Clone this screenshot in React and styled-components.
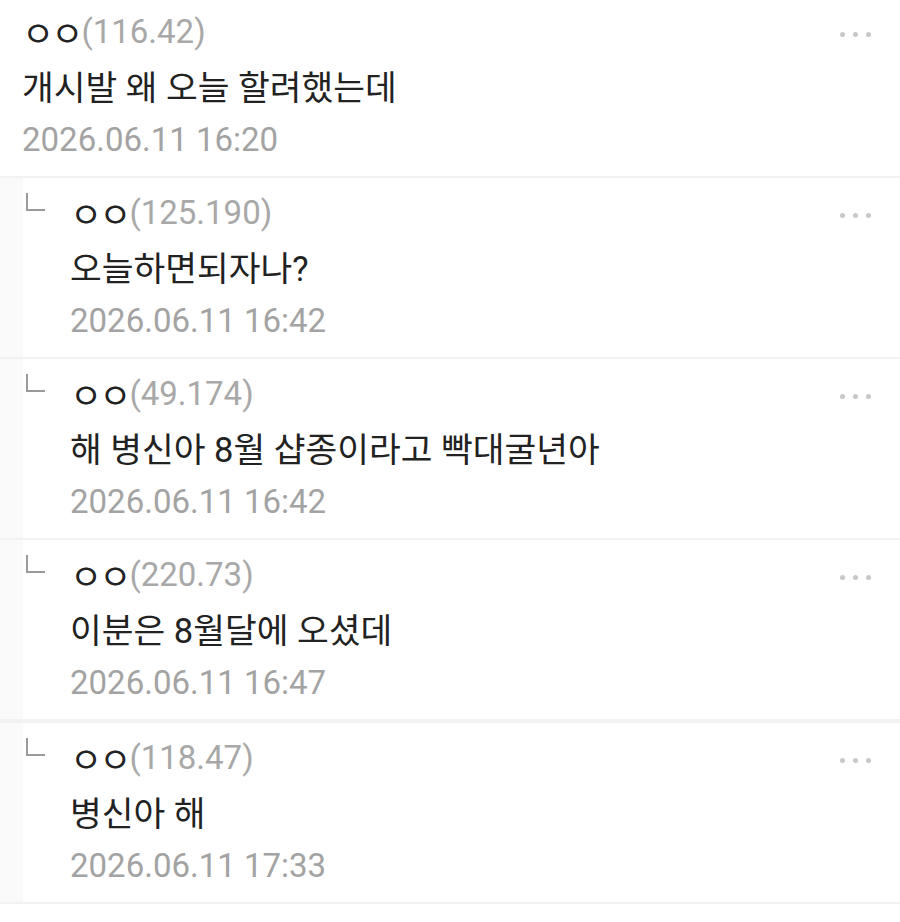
import styled, { createGlobalStyle } from "styled-components";

const comments = [
  { id: 1, ip: "116.42", text: "개시발 왜 오늘 할려했는데", date: "2026.06.11 16:20" },
  { id: 2, ip: "125.190", text: "오늘하면되자나?", date: "2026.06.11 16:42", reply: true },
  { id: 3, ip: "49.174", text: "해 병신아 8월 샵종이라고 빡대굴년아", date: "2026.06.11 16:42", reply: true },
  { id: 4, ip: "220.73", text: "이분은 8월달에 오셨데", date: "2026.06.11 16:47", reply: true, thick: true },
  { id: 5, ip: "118.47", text: "병신아 해", date: "2026.06.11 17:33", reply: true },
];

function App() {
  return (
    <>
      <GlobalStyle />
      <List>
        {comments.map((c, i) => (
          <Row key={c.id} $reply={c.reply} $first={i === 0} $thick={c.thick}>
            {c.reply && (
              <>
                <Strip />
                <MarkerCol>
                  <Marker />
                </MarkerCol>
              </>
            )}
            <Body>
              <Line>
                <Name>ㅇㅇ</Name>
                <Ip>({c.ip})</Ip>
              </Line>
              <Line>
                <Text>{c.text}</Text>
              </Line>
              <Line>
                <DateText>{c.date}</DateText>
              </Line>
            </Body>
            <Menu>
              <Dot />
              <Dot />
              <Dot />
            </Menu>
          </Row>
        ))}
      </List>
    </>
  );
}

const GlobalStyle = createGlobalStyle`
  html, body {
    margin: 0;
    padding: 0;
    background: #ffffff;
  }
  body {
    font-family: Roboto, "Noto Sans CJK KR", sans-serif;
    -webkit-font-smoothing: antialiased;
  }
`;

const List = styled.div`
  width: 900px;
  height: 922px;
  overflow: hidden;
  background: #ffffff;
`;

const Row = styled.div`
  display: flex;
  align-items: stretch;
  margin-top: ${(p) => (p.$first ? "-3px" : "0")};
  padding-left: ${(p) => (p.$reply ? "0" : "22px")};
  border-bottom: ${(p) => (p.$thick ? "4px" : "2px")} solid #f2f2f2;
`;

const Strip = styled.div`
  width: 23px;
  flex-shrink: 0;
  background: #fafafa;
`;

const MarkerCol = styled.div`
  width: 47px;
  flex-shrink: 0;
  padding: 15px 0 0 3px;
  box-sizing: border-box;
`;

const Marker = styled.span`
  display: block;
  width: 17px;
  height: 16px;
  border-left: 2.5px solid #9a9a9a;
  border-bottom: 2.5px solid #9a9a9a;
`;

const Body = styled.div`
  flex: 1;
  display: flex;
  flex-direction: column;
  padding: 7px 0 10px;
`;

const Line = styled.div`
  height: 54px;
  display: flex;
  align-items: center;
  white-space: nowrap;
`;

const Name = styled.span`
  font-size: 35px;
  color: #222222;
  letter-spacing: -3px;
  margin-right: 1px;
`;

const Ip = styled.span`
  font-size: 33px;
  color: #a8a8a8;
`;

const Text = styled.span`
  font-size: 34.5px;
  color: #222222;
`;

const DateText = styled.span`
  font-size: 33px;
  color: #a3a3a3;
`;

const Menu = styled.div`
  width: 100px;
  flex-shrink: 0;
  display: flex;
  justify-content: flex-end;
  align-items: flex-start;
  gap: 8px;
  padding: 35px 29px 0 0;
  box-sizing: border-box;
`;

const Dot = styled.span`
  width: 5px;
  height: 5px;
  border-radius: 50%;
  background: #c8c8c8;
`;

export default App;
